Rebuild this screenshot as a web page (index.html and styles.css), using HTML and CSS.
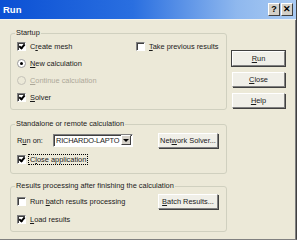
FILE: index.html
```html
<!DOCTYPE html>
<html lang="en">
<head>
    <meta charset="UTF-8">
    <title>Run</title>
    <link rel="stylesheet" href="styles.css">
</head>
<body>

    <div class="dialog">
        <div class="titlebar">
            <span class="title">Run</span>
            <div class="title-btns">
                <span class="tbtn">?</span>
                <span class="tbtn">&#x2715;</span>
            </div>
        </div>

        <div class="content">
            <div class="groups">
                <fieldset class="group startup">
                    <legend>Startup</legend>
                    <div class="cols">
                        <div class="col left">
                            <div class="row"><span class="check on"></span><span>C<u>r</u>eate mesh</span></div>
                            <div class="row"><span class="radio on"></span><span><u>N</u>ew calculation</span></div>
                            <div class="row disabled"><span class="radio"></span><span><u>C</u>ontinue calculation</span></div>
                            <div class="row"><span class="check on"></span><span><u>S</u>olver</span></div>
                        </div>
                        <div class="col">
                            <div class="row"><span class="check"></span><span><u>T</u>ake previous results</span></div>
                        </div>
                    </div>
                </fieldset>

                <fieldset class="group remote">
                    <legend>Standalone or remote calculation</legend>
                    <div class="row tall">
                        <span class="lbl">R<u>u</u>n on:</span>
                        <div class="combo">
                            <span class="combo-text">RICHARDO-LAPTO</span>
                            <span class="combo-btn"></span>
                        </div>
                        <button class="btn wide net">Net<u>w</u>ork Solver...</button>
                    </div>
                    <div class="row"><span class="check on"></span><span class="focus">C<u>l</u>ose application</span></div>
                </fieldset>

                <fieldset class="group results">
                    <legend>Results processing after finishing the calculation</legend>
                    <div class="row tall2">
                        <span class="check"></span><span>Run <u>b</u>atch results processing</span>
                        <button class="btn wide batch"><u>B</u>atch Results...</button>
                    </div>
                    <div class="row"><span class="check on"></span><span><u>L</u>oad results</span></div>
                </fieldset>
            </div>

            <div class="buttons">
                <button class="btn default"><u>R</u>un</button>
                <button class="btn"><u>C</u>lose</button>
                <button class="btn"><u>H</u>elp</button>
            </div>
        </div>
    </div>

</body>
</html>
```

FILE: styles.css
```css
body {
    margin: 0;
    font-family: "Liberation Sans", Arial, sans-serif;
    font-size: 7.4px;
    color: #1a1a1a;
    background-color: #ece9d8;
}

.dialog {
    width: 297px;
    height: 240px;
    box-sizing: border-box;
    border-right: 1px solid #404040;
    border-bottom: 1px solid #808080;
    box-shadow: inset -1px 0 #808080;
    display: flex;
    flex-direction: column;
}

.titlebar {
    height: 19px;
    display: flex;
    align-items: center;
    justify-content: space-between;
    padding: 0 3px;
    background: linear-gradient(to right, #0b50d4 0%, #2a6fe0 45%, #8fb8ee 80%, #a9caf2 100%);
    border-bottom: 1px solid #f4f3ee;
}

.title {
    color: #fff;
    font-weight: bold;
    font-size: 9.5px;
}

.title-btns {
    display: flex;
    gap: 1px;
}

.tbtn {
    width: 12px;
    height: 13px;
    box-sizing: border-box;
    background-color: #d4d0c8;
    border: 1px solid;
    border-color: #fff #404040 #404040 #fff;
    font-weight: bold;
    font-size: 9px;
    line-height: 11px;
    text-align: center;
    color: #000;
}

.content {
    display: flex;
    padding: 8px 0 0 10px;
    gap: 5px;
}

.groups {
    width: 217px;
    display: flex;
    flex-direction: column;
}

.group {
    margin: 0;
    border: 1px solid #d0d0bf;
    border-radius: 3px;
    padding: 0 6px 3px 6px;
}

.group legend {
    padding: 0 1px;
    margin-left: -2px;
    line-height: 10px;
}

.remote {
    margin-top: 9px;
    padding-bottom: 5px;
}

.results {
    margin-top: 7px;
    padding-bottom: 3px;
}

.cols {
    display: flex;
}

.col.left {
    width: 119px;
}

.row {
    height: 17px;
    display: flex;
    align-items: center;
    white-space: nowrap;
}

.row.tall {
    height: 22px;
}

.row.tall2 {
    height: 20px;
}

.disabled {
    color: #aca899;
}

.check {
    width: 9px;
    height: 9px;
    box-sizing: border-box;
    border: 1px solid;
    border-color: #808080 #fff #fff #808080;
    background-color: #fff;
    box-shadow: inset 1px 1px #404040;
    margin-right: 4px;
    position: relative;
}

.check.on::after {
    content: "";
    position: absolute;
    left: 2px;
    top: 0px;
    width: 2px;
    height: 4px;
    border: solid #000;
    border-width: 0 2px 2px 0;
    transform: rotate(40deg);
}

.radio {
    width: 9px;
    height: 9px;
    box-sizing: border-box;
    border-radius: 50%;
    border: 1px solid #9a9a9a;
    background-color: #fff;
    margin-right: 4px;
    position: relative;
}

.disabled .radio {
    background-color: #ece9d8;
    border-color: #c4c2b8;
}

.radio.on::after {
    content: "";
    position: absolute;
    left: 2px;
    top: 2px;
    width: 3px;
    height: 3px;
    border-radius: 50%;
    background-color: #000;
}

.lbl {
    width: 36px;
}

.combo {
    width: 80px;
    height: 13px;
    box-sizing: border-box;
    border: 1px solid;
    border-color: #808080 #fff #fff #808080;
    box-shadow: inset 1px 1px #404040;
    background-color: #fff;
    display: flex;
    align-items: center;
    padding: 0 1px 0 2px;
}

.combo-text {
    flex: 1;
    letter-spacing: -0.2px;
    overflow: hidden;
}

.combo-btn {
    width: 10px;
    height: 10px;
    flex-shrink: 0;
    box-sizing: border-box;
    background-color: #d4d0c8;
    border: 1px solid;
    border-color: #fff #404040 #404040 #fff;
    position: relative;
}

.combo-btn::after {
    content: "";
    position: absolute;
    left: 1px;
    top: 3px;
    border-left: 3px solid transparent;
    border-right: 3px solid transparent;
    border-top: 3px solid #000;
}

.focus {
    outline: 1px dotted #000;
    padding: 0 1px;
    margin-left: -1px;
}

.btn {
    width: 53px;
    height: 15px;
    box-sizing: border-box;
    padding: 0;
    font-family: inherit;
    font-size: 7.4px;
    color: #1a1a1a;
    background-color: #f0efe8;
    border: 1px solid;
    border-color: #fff #808080 #808080 #fff;
    box-shadow: 1px 1px #404040;
}

.btn.default {
    outline: 1px solid #404040;
    outline-offset: 0;
}

.btn.wide {
    width: 60px;
    margin-left: auto;
    margin-right: 2px;
}

.buttons {
    display: flex;
    flex-direction: column;
    gap: 6px;
    padding-top: 23px;
}
```
